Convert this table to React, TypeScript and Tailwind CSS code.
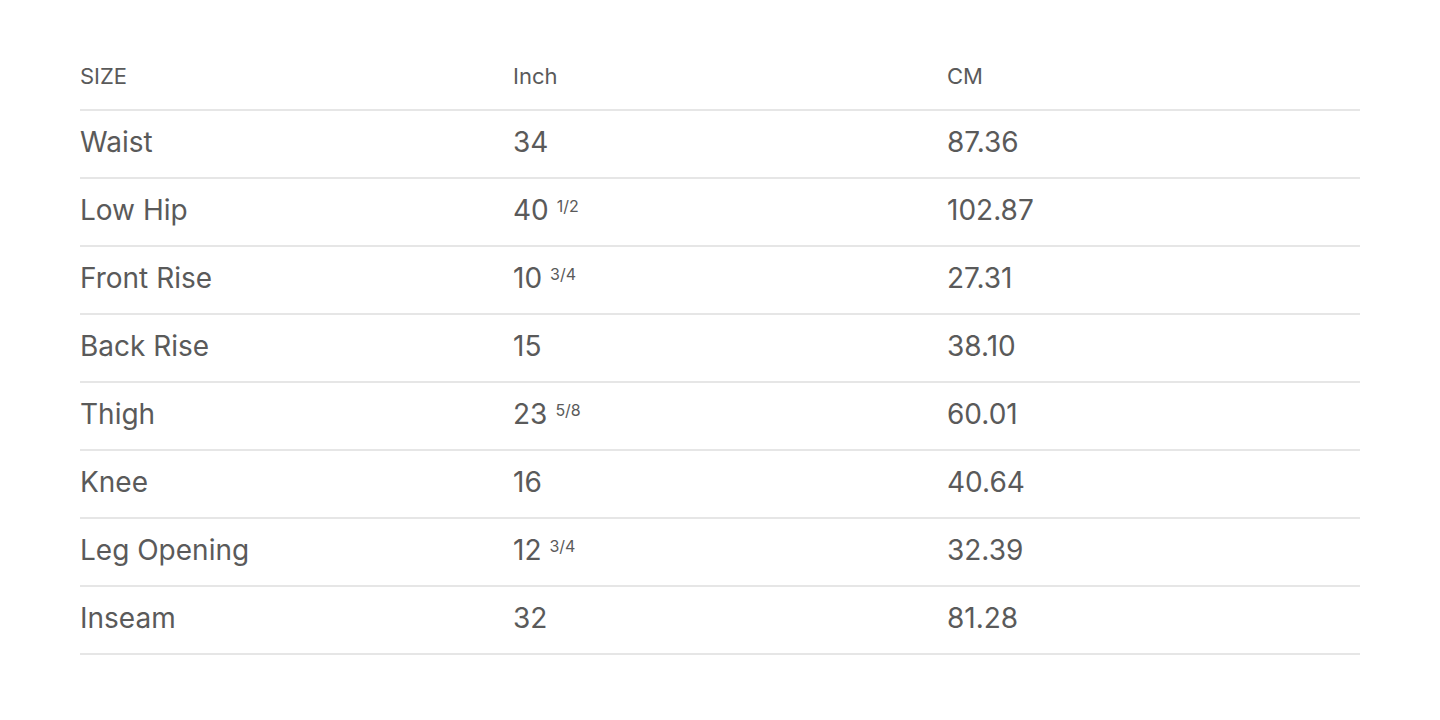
const rows: { label: string; inch: string; frac?: string; cm: string }[] = [
  { label: 'Waist', inch: '34', cm: '87.36' },
  { label: 'Low Hip', inch: '40', frac: '1/2', cm: '102.87' },
  { label: 'Front Rise', inch: '10', frac: '3/4', cm: '27.31' },
  { label: 'Back Rise', inch: '15', cm: '38.10' },
  { label: 'Thigh', inch: '23', frac: '5/8', cm: '60.01' },
  { label: 'Knee', inch: '16', cm: '40.64' },
  { label: 'Leg Opening', inch: '12', frac: '3/4', cm: '32.39' },
  { label: 'Inseam', inch: '32', cm: '81.28' },
];

export default function App() {
  return (
    <div className="min-h-screen bg-white px-20 pt-[43px] font-['Inter',sans-serif] text-[#5a5a5a]">
      <div className="grid h-[68px] grid-cols-[433px_434px_1fr] items-center border-b-2 border-[#e6e6e6] text-[22px]">
        <div>SIZE</div>
        <div>Inch</div>
        <div>CM</div>
      </div>
      {rows.map((r) => (
        <div
          key={r.label}
          className="grid h-[68px] grid-cols-[433px_434px_1fr] items-center border-b-2 border-[#e6e6e6] pb-1 text-[28px]"
        >
          <div>{r.label}</div>
          <div>
            {r.inch}
            {r.frac && <sup className="ml-2 text-[16px]">{r.frac}</sup>}
          </div>
          <div>{r.cm}</div>
        </div>
      ))}
    </div>
  );
}
